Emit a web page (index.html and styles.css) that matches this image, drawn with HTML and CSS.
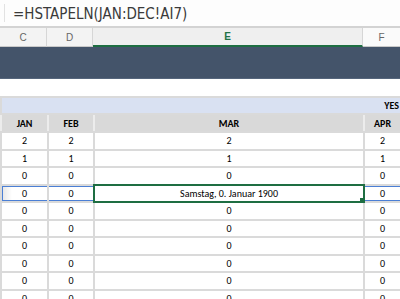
FILE: index.html
```html
<!DOCTYPE html>
<html lang="de">
<head>
    <meta charset="UTF-8">
    <meta name="viewport" content="width=device-width, initial-scale=1.0">
    <title>Tabelle</title>
    <link rel="stylesheet" href="styles.css">
</head>
<body>
    <div class="formula-bar">
        <span class="divider"></span>
        <span class="formula">=HSTAPELN(JAN:DEC!AI7)</span>
    </div>

    <div class="col-heads">
        <div class="col-head">C</div>
        <div class="col-head">D</div>
        <div class="col-head active">E</div>
        <div class="col-head last">F</div>
    </div>

    <div class="banner"></div>
    <div class="spacer"></div>

    <table class="sheet">
        <colgroup>
            <col class="c-jan">
            <col class="c-feb">
            <col class="c-mar">
            <col class="c-apr">
        </colgroup>
        <tr class="group-row">
            <td colspan="4">YES</td>
        </tr>
        <tr class="month-row">
            <th>JAN</th>
            <th>FEB</th>
            <th>MAR</th>
            <th>APR</th>
        </tr>
        <tr><td>2</td><td>2</td><td>2</td><td>2</td></tr>
        <tr><td>1</td><td>1</td><td>1</td><td>1</td></tr>
        <tr><td>0</td><td>0</td><td>0</td><td>0</td></tr>
        <tr class="selected">
            <td class="first">0</td>
            <td>0</td>
            <td class="active-cell">Samstag, 0. Januar 1900</td>
            <td>0</td>
        </tr>
        <tr><td>0</td><td>0</td><td>0</td><td>0</td></tr>
        <tr><td>0</td><td>0</td><td>0</td><td>0</td></tr>
        <tr><td>0</td><td>0</td><td>0</td><td>0</td></tr>
        <tr><td>0</td><td>0</td><td>0</td><td>0</td></tr>
        <tr><td>0</td><td>0</td><td>0</td><td>0</td></tr>
        <tr><td>0</td><td>0</td><td>0</td><td>0</td></tr>
    </table>
</body>
</html>
```

FILE: styles.css
```css
body {
    margin: 0;
    width: 400px;
    height: 299px;
    overflow: hidden;
    background-color: #ffffff;
    font-family: Carlito, Lato, "Liberation Sans", sans-serif;
}
.formula-bar {
    height: 26px;
    display: flex;
    align-items: center;
    background-color: #fdfdfd;
    border-bottom: 2px solid #d3d3d3;
}
.divider {
    width: 1px;
    height: 18px;
    margin-left: 4px;
    background-color: #e2e2e2;
}
.formula {
    margin-left: 8px;
    padding-top: 1px;
    font-family: "Liberation Sans Narrow", "DejaVu Sans Condensed", "Liberation Sans", sans-serif;
    font-size: 15px;
    color: #3a3a3a;
}
.col-heads {
    display: grid;
    grid-template-columns: 47px 46px 270px 1fr;
    height: 19px;
}
.col-head {
    display: flex;
    justify-content: center;
    align-items: center;
    font-family: "Liberation Sans", sans-serif;
    font-size: 10px;
    color: #666666;
    background-color: #f3f3f3;
    border-right: 1px solid #d6d6d6;
    border-bottom: 1px solid #c9c9c9;
}
.col-head.active {
    color: #217346;
    font-weight: bold;
    background-color: #efefef;
    border-bottom: 2px solid #1e6e42;
}
.col-head.last {
    background-color: #fafafa;
    border-right: none;
}
.banner {
    height: 31px;
    background-color: #44546a;
    border-bottom: 1px solid #56667c;
}
.spacer {
    height: 17px;
}
.sheet {
    width: 400px;
    table-layout: fixed;
    border-collapse: collapse;
    font-size: 10px;
    color: #000000;
}
.c-jan { width: 47px; }
.c-feb { width: 46px; }
.c-mar { width: 270px; }
.c-apr { width: 37px; }
.sheet td,
.sheet th {
    padding: 0;
    text-align: center;
    border: 2px solid #dadada;
    overflow: hidden;
    white-space: nowrap;
}
.sheet td {
    height: 15.5px;
}
.group-row td {
    height: 15px;
    text-align: right;
    padding-right: 1px;
    font-weight: bold;
    background-color: #d9e1f2;
}
.month-row th {
    height: 16px;
    font-weight: bold;
    background-color: #d9d9d9;
    border-left-color: #ececec;
    border-right-color: #ececec;
}
.selected td {
    box-shadow: inset 0 1px #4b7fd5, inset 0 -1px #4b7fd5;
}
.selected td.first {
    background-image: linear-gradient(to right, #e6e6e6, #ffffff 10px);
    box-shadow: inset 1px 1px #4b7fd5, inset 0 -1px #4b7fd5;
}
.selected td.active-cell {
    position: relative;
    box-shadow: none;
    outline: 2px solid #1e6e42;
    outline-offset: -1px;
}
.active-cell::after {
    content: "";
    position: absolute;
    right: -3px;
    bottom: -3px;
    width: 5px;
    height: 5px;
    background-color: #1e6e42;
    border: 1px solid #ffffff;
}
```
